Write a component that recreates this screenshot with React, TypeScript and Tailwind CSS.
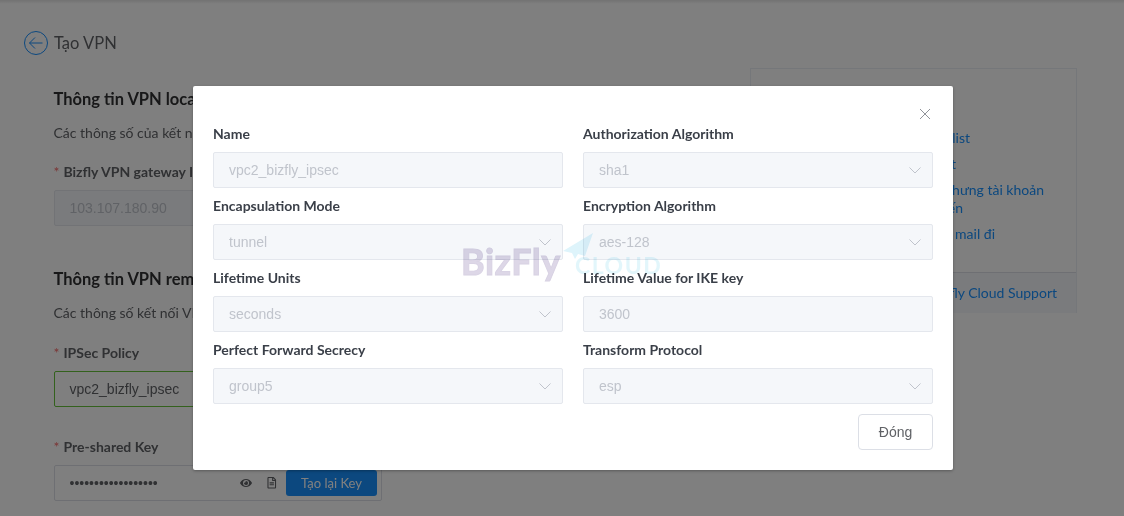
import { FaEye, FaRegFileAlt } from "react-icons/fa";

const FIELDS = [
  { label: "Name", value: "vpc2_bizfly_ipsec", select: false },
  { label: "Authorization Algorithm", value: "sha1", select: true },
  { label: "Encapsulation Mode", value: "tunnel", select: true },
  { label: "Encryption Algorithm", value: "aes-128", select: true },
  { label: "Lifetime Units", value: "seconds", select: true },
  { label: "Lifetime Value for IKE key", value: "3600", select: false },
  { label: "Perfect Forward Secrecy", value: "group5", select: true },
  { label: "Transform Protocol", value: "esp", select: true },
];

const LATO = "font-['Lato','Liberation_Sans',sans-serif]";
const ARIAL = "font-['Liberation_Sans',Arial,sans-serif]";

function Chevron() {
  return (
    <svg width="14" height="14" viewBox="0 0 14 14" fill="none" className="shrink-0">
      <path d="M1.5 4.5 7 10l5.500-5.500" stroke="#c0c4cc" strokeWidth="1" />
    </svg>
  );
}

function Field({ label, value, select }: { label: string; value: string; select: boolean }) {
  return (
    <div className="mb-[9px]">
      <div className={`mb-[9px] h-[18px] text-sm leading-[18px] font-bold text-[#3a3f48] ${LATO}`}>{label}</div>
      <div
        className={`flex h-9 items-center justify-between rounded-[2px] border border-[#e4e7ed] bg-[#f5f7fa] pr-[10px] pl-[15px] text-sm text-[#c0c4cc] ${ARIAL}`}
      >
        <span>{value}</span>
        {select && <Chevron />}
      </div>
    </div>
  );
}

function Watermark() {
  return (
    <div className="pointer-events-none absolute top-[232px] left-[461px] h-[56px] w-[204px] mix-blend-multiply">
      <span className={`absolute top-[9px] left-0 text-[36px] leading-[40px] font-bold tracking-[0.5px] text-[#d9d3e4]/90 [-webkit-text-stroke:1px_#d9d3e4] ${LATO}`}>
        BizFly
      </span>
      <svg width="32" height="28" viewBox="0 0 32 28" className="absolute top-0 left-[101px]">
        <path d="M31 1 1 19l9 2 3 6 3-5 7 2z" fill="#def4fb" />
      </svg>
      <span className={`absolute top-[19px] left-[114px] text-[23px] leading-[28px] font-bold tracking-[1.5px] text-[#dff5fb]/90 ${LATO}`}>
        CLOUD
      </span>
    </div>
  );
}

function Modal() {
  return (
    <div className="absolute top-[86px] left-[193px] h-[384px] w-[760px] rounded-[2px] bg-white px-5 pt-[39px] shadow-[0_1px_3px_rgba(0,0,0,0.3)]">
      <button className="absolute top-[22px] right-[22px] text-[#909399]">
        <svg width="12" height="12" viewBox="0 0 12 12" fill="none">
          <path d="M1 1l10 10M11 1 1 11" stroke="currentColor" strokeWidth="1" />
        </svg>
      </button>
      <div className="grid grid-cols-2 gap-x-5">
        {FIELDS.map((f) => (
          <Field key={f.label} {...f} />
        ))}
      </div>
      <div className="flex justify-end pt-[1px]">
        <button className={`h-9 w-[75px] rounded-[4px] border border-[#dcdfe6] bg-white text-sm text-[#606266] ${ARIAL}`}>
          Đóng
        </button>
      </div>
    </div>
  );
}

function Required({ children }: { children: string }) {
  return (
    <div className="text-sm leading-[18px] font-bold text-[#606266]">
      <span className="mr-[4px] font-normal text-[#f56c6c]">*</span>
      {children}
    </div>
  );
}

function Sidebar() {
  return (
    <aside className="mt-[64px] ml-[368px] h-[245px] w-[327px] shrink-0 border border-[#ebeef5] text-sm leading-[18px] text-[#1890ff]">
      <div className="h-[203px] pt-[60px]">
        <ul className="flex flex-col gap-2 text-right">
          <li className="mr-[106px]">Kiểm tra blacklist</li>
          <li className="mr-[120px]">Cấu hình SMTP Host</li>
          <li>
            <div className="mr-[32px]">Xác thực chưng tài khoản</div>
            <div className="mr-[113px]">trực tuyến</div>
          </li>
          <li className="mr-[81px]">Kiểm tra mail đi</li>
        </ul>
      </div>
      <div className="flex h-[41px] items-center justify-end border-t border-[#dcdfe6] bg-[#f5f7fa] pr-[19px]">
        Liên hệ Bizfly Cloud Support
      </div>
    </aside>
  );
}

export default function App() {
  return (
    <div className={`relative h-[516px] w-[1124px] overflow-hidden bg-white ${LATO}`}>
      <div className="h-[4px] bg-gradient-to-b from-black/10 to-transparent" />
      <div className="flex">
        <main className="w-[382px] shrink-0 pl-6">
          <div className="mt-[27px] flex h-6 items-center gap-[6px] text-[16.5px] text-[#606266]">
            <svg width="24" height="24" viewBox="0 0 24 24" fill="none" stroke="#1890ff" strokeWidth="1">
              <circle cx="12" cy="12" r="11.5" />
              <path d="M18.500 12h-13M11 6.500 5.500 12l5.500 5.500" />
            </svg>
            <span>Tạo VPN</span>
          </div>
          <div className="pl-[29.5px]">
            <h2 className="mt-[34px] text-[16.5px] leading-5 font-bold text-[#303133]">Thông tin VPN local</h2>
            <p className="mt-[15px] text-sm leading-[18px] text-[#606266]">Các thông số của kết nối</p>
            <div className="mt-[21px]">
              <Required>Bizfly VPN gateway IP</Required>
            </div>
            <div className={`mt-[9px] flex h-9 items-center rounded-[2px] border border-[#e4e7ed] bg-[#f5f7fa] pl-[15px] text-sm text-[#c0c4cc] ${ARIAL}`}>
              103.107.180.90
            </div>
            <h2 className="mt-[43px] text-[16.5px] leading-5 font-bold text-[#303133]">Thông tin VPN remote</h2>
            <p className="mt-[15px] text-sm leading-[18px] text-[#606266]">Các thông số kết nối VPN</p>
            <div className="mt-[22px]">
              <Required>IPSec Policy</Required>
            </div>
            <div className={`mt-[9px] flex h-9 items-center rounded-[2px] border border-[#67c23a] pl-[15px] text-sm text-[#606266] ${ARIAL}`}>
              vpc2_bizfly_ipsec
            </div>
            <div className="mt-[31px]">
              <Required>Pre-shared Key</Required>
            </div>
            <div className={`mt-[9px] flex h-9 items-center rounded-[2px] border border-[#dcdfe6] pr-1 pl-[15px] text-sm text-[#606266] ${ARIAL}`}>
              <span className="flex-1">••••••••••••••••••</span>
              <FaEye className="mr-[14px] text-[12px]" />
              <FaRegFileAlt className="mr-[9px] text-[11.5px]" />
              <button className={`h-[26px] w-[91px] rounded-[3px] bg-[#1890ff] text-[13px] text-white ${LATO}`}>Tạo lại Key</button>
            </div>
          </div>
        </main>
        <Sidebar />
      </div>
      <div className="absolute inset-0 bg-black/50" />
      <Modal />
      <Watermark />
    </div>
  );
}
